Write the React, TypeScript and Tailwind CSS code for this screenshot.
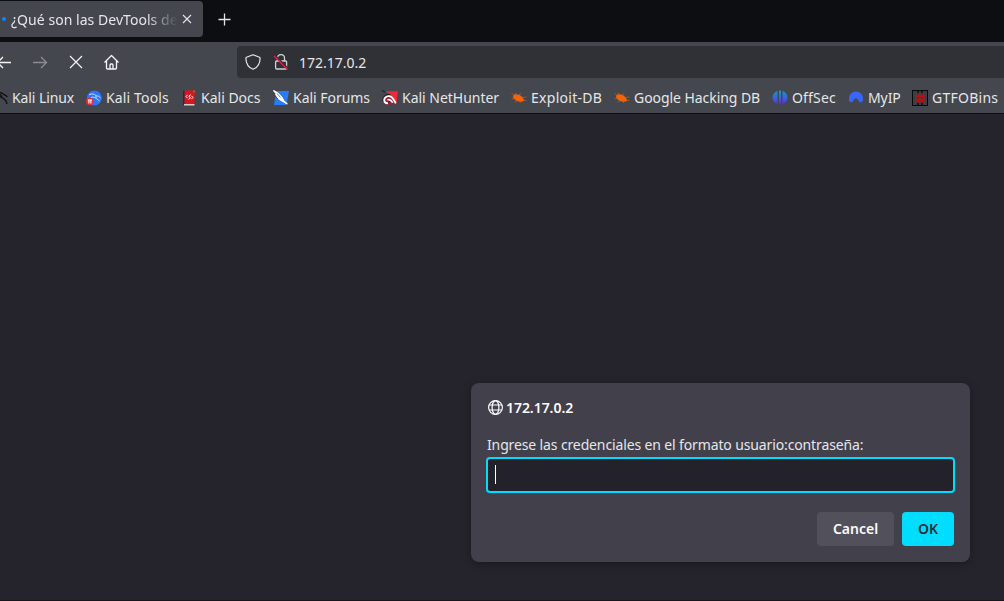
import React from "react";

const KaliLinux = () => (
  <svg viewBox="0 0 16 16" className="size-4 shrink-0" fill="none" stroke="#111214">
    <path d="M2 3c5-1.200 8.500-.5 10.500 2 1.200.2 2 .8 3 2M2 7c4-1 7-.5 9.500 1.300M8.500 4c.5 3 2 4.500 4 5.300 1.500.8 2 2.200 2.500 4.700" strokeWidth="1.400" />
  </svg>
);

const KaliTools = () => (
  <svg viewBox="0 0 16 16" className="size-4 shrink-0" fill="none">
    <circle cx="8.300" cy="8" r="7.500" fill="#2777ff" />
    <path d="M3 4.800c3-1.500 5.500-1 7.200 1 2 0 3 .8 4.500 2.300M5 7.500c2-.7 3.500-.3 5 .7M10 6c-.5 2.500 1.500 3.300 3.500 5" stroke="#c9ddff" strokeWidth="1" />
    <circle cx="3.800" cy="11.500" r="3.800" fill="#ee2737" />
    <path d="M1.800 10h4.200M2.900 10v3.500M4.900 10v3.500" stroke="#fff" strokeWidth="1.100" />
  </svg>
);

const KaliDocs = () => (
  <svg viewBox="0 0 16 16" className="size-4 shrink-0" fill="none">
    <path d="M2 .5h2V15H2z" fill="#202b59" />
    <path d="M3.500.5H13.500V14H3.500z" fill="#d9151e" />
    <path d="M12 .5h1.500v3z" fill="#f47721" />
    <path d="M3 14h10.500v1.500H3z" fill="#d8c9cb" />
    <path d="M6.600 4.800 5 6.500l1.600 1.700M10.400 5.800 12 7.500l-1.600 1.700" stroke="#fff" strokeWidth=".9" />
    <path d="m9.800 4.800-2 1.200 1.700 2-2 1.300" stroke="#fff" strokeWidth="1" />
  </svg>
);

const KaliForums = () => (
  <svg viewBox="0 0 16 16" className="size-4 shrink-0" fill="none">
    <path d="M3 1h13l-2.500 14H1z" fill="#247cff" />
    <path d="m0 0 6 3 4.500 5 1 2.500 4 4-1.500.8-4-3.300-4-1.500L2 6z" fill="#202329" />
    <path d="m.5.500 5 3 4 4.500 1.500 3 3.500 3.200-4.500-2.700-3.800-2L3 5l2 .8z" fill="#fff" stroke="#fff" strokeWidth="1.200" />
    <path d="m4 3.500 3.500 4" stroke="#30343b" strokeWidth=".6" />
  </svg>
);

const NetHunter = () => (
  <svg viewBox="0 0 16 16" className="size-4 shrink-0" fill="none">
    <path d="M4 1.200h12L14.500 13z" fill="#ee2939" />
    <path d="m0 .3 3 2M.8 11C.5 6 5 3.500 8.800 5" stroke="#22242a" strokeWidth="1.300" />
    <path d="M1.500 9C3 5 7.500 3.800 10 6.500l5 6.500-3 1.500H3z" fill="#a91932" />
    <path d="M6 13.200C1.500 13.700 1 8.200 4.800 6.500c4-1.700 6 1.500 9 6.900M5.500 10c2-1 3.500 0 5 2.800" stroke="#fff" strokeWidth="1.800" />
    <path d="m6 11.700 2-.3 1.500 2" stroke="#22242a" strokeWidth=".8" />
  </svg>
);

const Exploit = () => (
  <svg viewBox="0 0 16 16" className="size-4 shrink-0" fill="none" stroke="#d9611c">
    <path d="M2 6C3 3.700 6 3.800 8.500 5c2.500 1.100 4.200 3.300 4.700 6-3.200 1.200-6.900.7-9.200-1.300C2.700 8.600 2 7.500 2 6" fill="#f2640c" stroke="none" />
    <path d="M3.500 5.500.5 3.500M5 4.500 4.200 2.500M8 5l2.500-2M11 7.500l4.500-.5M12.500 10l3 .8M6 10.500l-2.500 1.800M3 8.500l-2.500.3M9 11l.5 2" strokeWidth=".6" />
  </svg>
);

const OffSec = () => (
  <svg viewBox="0 0 16 16" className="size-4 shrink-0">
    <defs><linearGradient id="offsec" x2="0" y2="1"><stop stopColor="#159bbd" /><stop offset=".5" stopColor="#3c62df" /><stop offset="1" stopColor="#6520d5" /></linearGradient></defs>
    <path fill="url(#offsec)" d="M5.500 1v13C2 13 .5 10.500.5 7.500s2-5.500 5-6.500M7 .5h2V12l-.4 3.500H7.400L7 12zM10.500 1c3 1 5 3.500 5 6.500s-1.500 5.500-5 6.500z" />
  </svg>
);

const MyIP = () => (
  <svg viewBox="0 0 16 16" className="size-4 shrink-0"><path d="M1 9.300C1 4.500 4 1.500 8 1.500s7 3 7 7.800c0 2.500-1.500 3.400-3.200 3L9.300 9c-.8-1-2-1-2.800 0L4 12.300c-1.600.5-3-.5-3-3" fill="#3865ff" /></svg>
);

const GTFOBins = () => (
  <svg viewBox="0 0 16 16" className="size-4 shrink-0">
    <rect x=".5" y=".5" width="15" height="15" fill="#3c3f45" stroke="#08090a" />
    <path d="M6 1v14M10 1v14" stroke="#111" strokeWidth="1.600" />
    <path d="M6 3v10M10 3v10M3 6h10M3 10h10" stroke="#c90b0b" strokeWidth="1.700" />
  </svg>
);

const bookmarks = [
  { label: "Kali Linux", icon: <KaliLinux />, box: "w-[94px] tracking-[-0.09px]" },
  { label: "Kali Tools", icon: <KaliTools />, box: "w-[95px] tracking-[0.14px]" },
  { label: "Kali Docs", icon: <KaliDocs />, box: "w-[92px] tracking-[0px]" },
  { label: "Kali Forums", icon: <KaliForums />, box: "w-[109px] tracking-[-0.03px]" },
  { label: "Kali NetHunter", icon: <NetHunter />, box: "w-[129px] tracking-[-0.02px]" },
  { label: "Exploit-DB", icon: <Exploit />, box: "w-[103px] tracking-[0.28px]" },
  { label: "Google Hacking DB", icon: <Exploit />, box: "w-[158px] tracking-[-0.06px]" },
  { label: "OffSec", icon: <OffSec />, box: "w-[76px] tracking-[0.18px]" },
  { label: "MyIP", icon: <MyIP />, box: "w-[64px] tracking-[-0.1px]" },
  { label: "GTFOBins", icon: <GTFOBins />, box: "w-[92px] tracking-[0.25px]" },
];

export default function App() {
  return (
    <div className="flex h-[601px] w-[1004px] flex-col overflow-hidden border-b border-[#17161c] bg-[#25232c] font-['Noto_Sans',sans-serif] text-sm text-[#e6e6e8]">
      <header className="flex h-[42px] shrink-0 bg-[#0c0e12]">
        <div className="mt-px flex h-9 w-[203px] items-center rounded-r bg-[#44474e]">
          <span className="ml-0.5 size-1 shrink-0 rounded-full bg-[#0a84ff]" />
          <span className="ml-[5px] w-[167px] overflow-hidden whitespace-nowrap pt-0.5 tracking-[0.04px] [mask-image:linear-gradient(to_right,black_calc(100%-32px),transparent)]">¿Qué son las DevTools del</span>
          <svg viewBox="0 0 16 16" className="ml-px size-4 shrink-0" fill="none" stroke="currentColor" strokeWidth="1.100"><path d="m4 4 8 8M12 4l-8 8" /></svg>
        </div>
        <svg viewBox="0 0 16 16" className="mt-[11px] ml-[13px] size-4" fill="none" stroke="currentColor" strokeWidth="1.300"><path d="M8.500 2.500v12M2.500 8.500h12" /></svg>
      </header>

      <nav className="flex h-10 shrink-0 items-center bg-[#44474e]">
        <svg viewBox="0 0 16 16" className="-ml-1 size-4 shrink-0" fill="none" stroke="#f5f5f5" strokeWidth="1.300"><path d="M15 8.500H1.500M7 3 1.500 8.500 7 14" /></svg>
        <svg viewBox="0 0 16 16" className="ml-5 size-4 shrink-0" fill="none" stroke="#8b8d91" strokeWidth="1.300"><path d="M1 8.500h13.500M9 3l5.500 5.500L9 14" /></svg>
        <svg viewBox="0 0 16 16" className="ml-5 size-4 shrink-0" fill="none" stroke="#f5f5f5" strokeWidth="1.200"><path d="m2 2 12 12M14 2 2 14" /></svg>
        <svg viewBox="0 0 16 16" className="ml-5 size-4 shrink-0" fill="none" stroke="#f5f5f5" strokeWidth="1.300" strokeLinejoin="round"><path d="m.5 8.500 7-7 7 7M2.500 7v7c0 .6.400 1 1 1h8c.6 0 1-.4 1-1V7M6 15v-4c0-.6.400-1 1-1h1c.6 0 1 .4 1 1v4" /></svg>
        <div className="ml-[117px] flex h-8 w-[767px] items-center rounded-l bg-[#303136] pl-2">
          <svg viewBox="0 0 16 16" className="size-4 shrink-0" fill="none" stroke="currentColor" strokeWidth="1.200" strokeLinejoin="round"><path d="m8 .8 6.500 2.500c.5.200.6.500.6.900C15 9.500 12.500 13.500 8 15.300 3.500 13.500 1 9.500.9 4.200c0-.4.100-.7.600-.9z" /></svg>
          <svg viewBox="0 0 16 16" className="ml-3 size-4 shrink-0" fill="none" stroke="#d0d0d2" strokeWidth="1.300"><path d="M4.500 7V4a3.500 3.500 0 0 1 7 0v3" /><rect x="2.600" y="7" width="11" height="8" rx="1" /><path d="m2 1.200 13 13" stroke="#303136" strokeWidth="1.500" /><path d="m1 2 13.500 13.500" stroke="#ef1b4b" strokeWidth="1.300" /></svg>
          <span className="ml-2.5 whitespace-nowrap pt-0.5">172.17.0.2</span>
        </div>
      </nav>

      <div className="flex h-8 shrink-0 items-center border-b border-[#0d0e12] bg-[#44474e]">
        <div className="-ml-2 flex">
          {bookmarks.map(({ label, icon, box }) => (
            <div key={label} className={`flex shrink-0 items-center gap-1 ${box}`}>{icon}<span className="pt-px whitespace-nowrap leading-[18px]">{label}</span></div>
          ))}
        </div>
      </div>

      <main className="flex flex-1 items-end pb-[38px] pl-[471px]">
        <section className="flex h-[179px] w-[499px] flex-col rounded-lg bg-[#42404b] px-4 pt-[15px] shadow-[0_2px_8px_rgba(0,0,0,0.3)]">
          <div className="flex h-[18px] items-center gap-1 font-semibold text-[#fbfbfe]">
            <svg viewBox="0 0 16 16" className="size-4" fill="none" stroke="currentColor" strokeWidth="1.200"><circle cx="8.500" cy="8.500" r="6.900" /><ellipse cx="8.500" cy="8.500" rx="3.400" ry="6.900" /><path d="M2 6h13M2 11h13" /></svg>
            <span className="-ml-px pt-0.5 tracking-[-0.05px]">172.17.0.2</span>
          </div>
          <label htmlFor="credentials" className="mt-[19px] whitespace-nowrap leading-5 tracking-[-0.13px]">Ingrese las credenciales en el formato usuario:contraseña:</label>
          <div id="credentials" className="mt-0.5 -mr-px -ml-px flex h-9 shrink-0 items-center rounded border-2 border-[#00ddff] bg-[#23222b] pl-1.5">
            <span className="mb-px ml-px h-[19px] w-px bg-white" />
          </div>
          <div className="mt-[19px] flex justify-end gap-2 font-semibold">
            <button className="h-[34px] w-[77px] rounded bg-[#52505b] text-[#fbfbfe]">Cancel</button>
            <button className="h-[34px] w-[52px] rounded bg-[#00ddff] text-[#2b2a33]">OK</button>
          </div>
        </section>
      </main>
    </div>
  );
}
